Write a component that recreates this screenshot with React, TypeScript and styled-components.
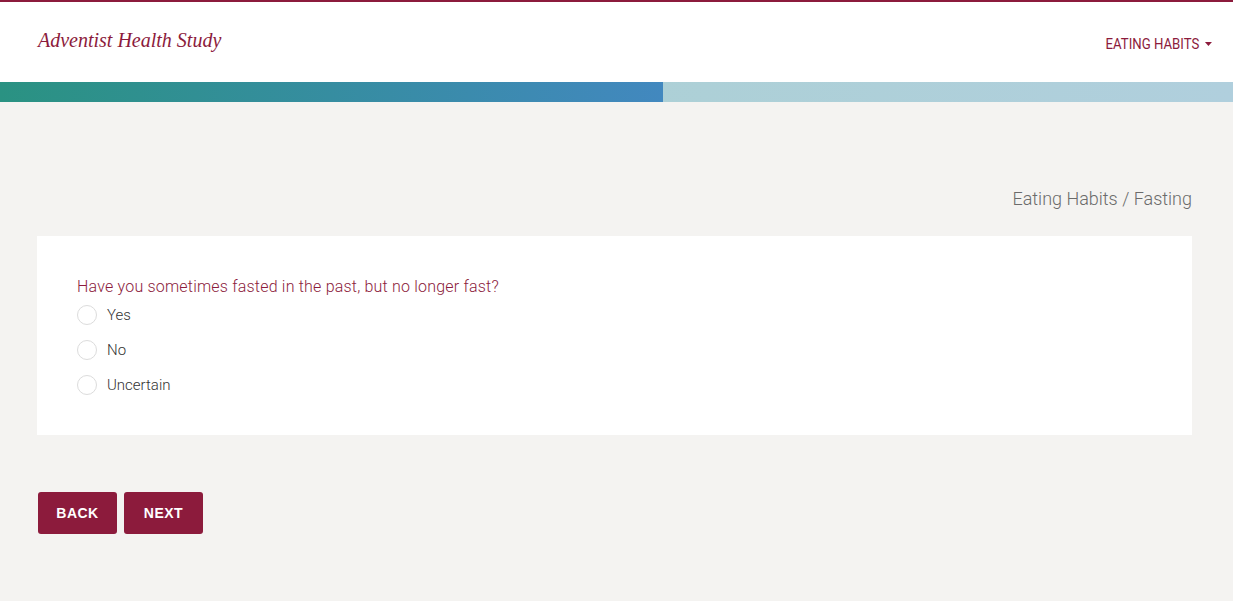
import styled, { createGlobalStyle } from "styled-components";

const GlobalStyle = createGlobalStyle`
    html, body {
        margin: 0;
        padding: 0;
        background: #f4f3f1;
        font-family: Roboto, "Liberation Sans", sans-serif;
    }
    * {
        box-sizing: border-box;
    }
`;

const Page = styled.div`
    min-height: 601px;
    background: #f4f3f1;
`;

const Header = styled.header`
    height: 82px;
    background: #fff;
    border-top: 2px solid #8c1b3c;
    display: flex;
    align-items: flex-start;
    justify-content: space-between;
    padding: 0 21px 0 38px;
`;

const Logo = styled.a`
    margin-top: 27px;
    font-family: "Liberation Serif", serif;
    font-style: italic;
    font-size: 20px;
    color: #8c1b3c;
    text-decoration: none;
`;

const NavItem = styled.a`
    margin-top: 33px;
    display: flex;
    align-items: center;
    gap: 6px;
    font-size: 15px;
    color: #8c1b3c;
    text-transform: uppercase;
    text-decoration: none;
    transform: scaleX(0.88);
    transform-origin: right center;
`;

const Caret = styled.span`
    width: 0;
    height: 0;
    border-left: 4px solid transparent;
    border-right: 4px solid transparent;
    border-top: 4px solid #8c1b3c;
`;

const Progress = styled.div`
    height: 20px;
    display: flex;
    background: linear-gradient(90deg, #a9d1cf, #b0cfdd);
`;

const ProgressFill = styled.div`
    height: 100%;
    background: linear-gradient(90deg, #2a9282, #4288bf);
`;

const Main = styled.main`
    padding: 86px 41px 0 37px;
`;

const Breadcrumb = styled.div`
    text-align: right;
    font-size: 18px;
    font-weight: 300;
    color: #6b6b6b;
    margin-bottom: 27px;
`;

const Card = styled.section`
    background: #fff;
    padding: 41px 40px 40px;
`;

const Question = styled.p`
    margin: 0 0 9px;
    font-size: 16px;
    font-weight: 300;
    letter-spacing: 0.2px;
    color: #8c1b3c;
`;

const Options = styled.div`
    display: flex;
    flex-direction: column;
    gap: 15px;
`;

const Option = styled.label`
    display: flex;
    align-items: center;
    gap: 10px;
    font-size: 15px;
    font-weight: 300;
    color: #333;
    cursor: pointer;
`;

const Radio = styled.input`
    appearance: none;
    margin: 0;
    width: 20px;
    height: 20px;
    border: 1px solid #dcdcdc;
    border-radius: 50%;
    background: #fff;
`;

const Actions = styled.div`
    display: flex;
    gap: 7px;
    margin-top: 57px;
    padding-left: 1px;
`;

const Button = styled.button`
    width: 79px;
    height: 42px;
    border: none;
    border-radius: 3px;
    background: #8c1b3c;
    color: #fff;
    font-family: "Liberation Sans", Arial, sans-serif;
    font-weight: 700;
    font-size: 14px;
    letter-spacing: 0.5px;
    text-transform: uppercase;
    cursor: pointer;
`;

const options = ["Yes", "No", "Uncertain"];

export default function App() {
    const progress = 663;

    return (
        <Page>
            <GlobalStyle />
            <Header>
                <Logo href="#">Adventist Health Study</Logo>
                <NavItem href="#">
                    Eating Habits <Caret />
                </NavItem>
            </Header>
            <Progress>
                <ProgressFill style={{ width: progress }} />
            </Progress>
            <Main>
                <Breadcrumb>Eating Habits / Fasting</Breadcrumb>
                <Card>
                    <Question>
                        Have you sometimes fasted in the past, but no longer fast?
                    </Question>
                    <Options>
                        {options.map((o) => (
                            <Option key={o}>
                                <Radio type="radio" name="fasted" value={o} />
                                {o}
                            </Option>
                        ))}
                    </Options>
                </Card>
                <Actions>
                    <Button>Back</Button>
                    <Button>Next</Button>
                </Actions>
            </Main>
        </Page>
    );
}
